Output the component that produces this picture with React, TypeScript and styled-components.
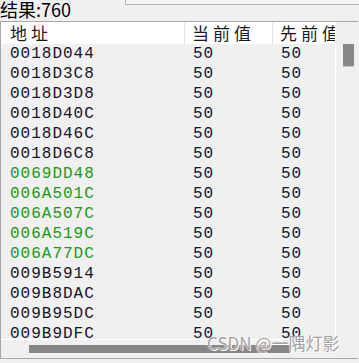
import React from 'react';
import styled, { createGlobalStyle } from 'styled-components';

const GlobalStyle = createGlobalStyle`
  html, body {
    margin: 0;
    padding: 0;
    background: #f0f0f0;
  }
  body {
    width: 359px;
    height: 363px;
    overflow: hidden;
    font-family: "Noto Sans CJK SC", sans-serif;
  }
`;

const Page = styled.div`
  position: relative;
  width: 359px;
  height: 363px;
  background: #f0f0f0;
`;

const TopBar = styled.div`
  display: flex;
  align-items: flex-start;
  height: 21px;
`;

const Title = styled.div`
  font-family: "Noto Sans CJK SC", sans-serif;
  font-size: 18px;
  line-height: 21px;
  color: #000;
  margin-top: -1px;
  width: 125px;
`;

const ClippedBox = styled.div`
  flex: 1;
  height: 4px;
  border-left: 1px solid #b4b4b4;
  border-bottom: 1px solid #b4b4b4;
  background: #f2f2f2;
`;

const ListBox = styled.div`
  width: 357px;
  height: 336px;
  border: 1px solid #a8a8a8;
  border-right: none;
  display: grid;
  grid-template-columns: 335px 22px;
  grid-template-rows: 318px 18px;
`;

const Content = styled.div`
  grid-column: 1;
  grid-row: 1;
  min-width: 0;
  overflow: hidden;
  border-right: 1px solid #fff;
  border-bottom: 1px solid #fff;
`;

const Header = styled.div`
  display: grid;
  grid-template-columns: 183px 88px 1fr;
  height: 22px;
  background: #fff;
`;

const HeaderCell = styled.div<{ $sep?: boolean }>`
  font-family: "Noto Sans CJK SC", sans-serif;
  font-size: 17px;
  line-height: 22px;
  letter-spacing: 4px;
  color: #1a1a1a;
  padding-left: ${p => (p.$sep ? 7 : 9)}px;
  border-left: ${p => (p.$sep ? '1px solid #e3e3e3' : 'none')};
  white-space: nowrap;
  overflow: hidden;
`;

const Row = styled.div`
  display: grid;
  grid-template-columns: 184px 88px 1fr;
  height: 20px;
  font-family: "Liberation Mono", monospace;
  font-size: 16px;
  letter-spacing: 1px;
  line-height: 20px;
  color: #14142a;
`;

const Cell = styled.div<{ $pad: number; $green?: boolean }>`
  padding-left: ${p => p.$pad}px;
  color: ${p => (p.$green ? '#1a991a' : 'inherit')};
  white-space: nowrap;
  overflow: hidden;
`;

const VScroll = styled.div`
  grid-column: 2;
  grid-row: 1 / span 2;
  padding: 22px 0 0 7px;
`;

const VThumb = styled.div`
  width: 11px;
  height: 22px;
  background: #878787;
  border-bottom: 1px solid #c8c8c8;
`;

const HScroll = styled.div`
  grid-column: 1;
  grid-row: 2;
  padding: 5px 0 0 28px;
`;

const HThumb = styled.div`
  width: 261px;
  height: 8px;
  background: #878787;
`;

const Watermark = styled.div`
  position: absolute;
  left: 207px;
  top: 332px;
  font-family: "Noto Sans CJK SC", sans-serif;
  font-size: 17px;
  line-height: 22px;
  color: #a0a0a0;
  text-shadow: 0 0 1px #fff, 0 0 1px #fff, 1px 1px 0 #fff;
  white-space: nowrap;
`;

const rows: [string, boolean][] = [
  ['0018D044', false],
  ['0018D3C8', false],
  ['0018D3D8', false],
  ['0018D40C', false],
  ['0018D46C', false],
  ['0018D6C8', false],
  ['0069DD48', true],
  ['006A501C', true],
  ['006A507C', true],
  ['006A519C', true],
  ['006A77DC', true],
  ['009B5914', false],
  ['009B8DAC', false],
  ['009B95DC', false],
  ['009B9DFC', false],
];

export default function App() {
  return (
    <Page>
      <GlobalStyle />
      <TopBar>
        <Title>结果:760</Title>
        <ClippedBox />
      </TopBar>
      <ListBox>
        <Content>
          <Header>
            <HeaderCell>地址</HeaderCell>
            <HeaderCell $sep>当前值</HeaderCell>
            <HeaderCell $sep>先前值</HeaderCell>
          </Header>
          {rows.map(([addr, green]) => (
            <Row key={addr}>
              <Cell $pad={9} $green={green}>{addr}</Cell>
              <Cell $pad={8}>50</Cell>
              <Cell $pad={8}>50</Cell>
            </Row>
          ))}
        </Content>
        <VScroll>
          <VThumb />
        </VScroll>
        <HScroll>
          <HThumb />
        </HScroll>
      </ListBox>
      <Watermark>CSDN @一隅灯影</Watermark>
    </Page>
  );
}
